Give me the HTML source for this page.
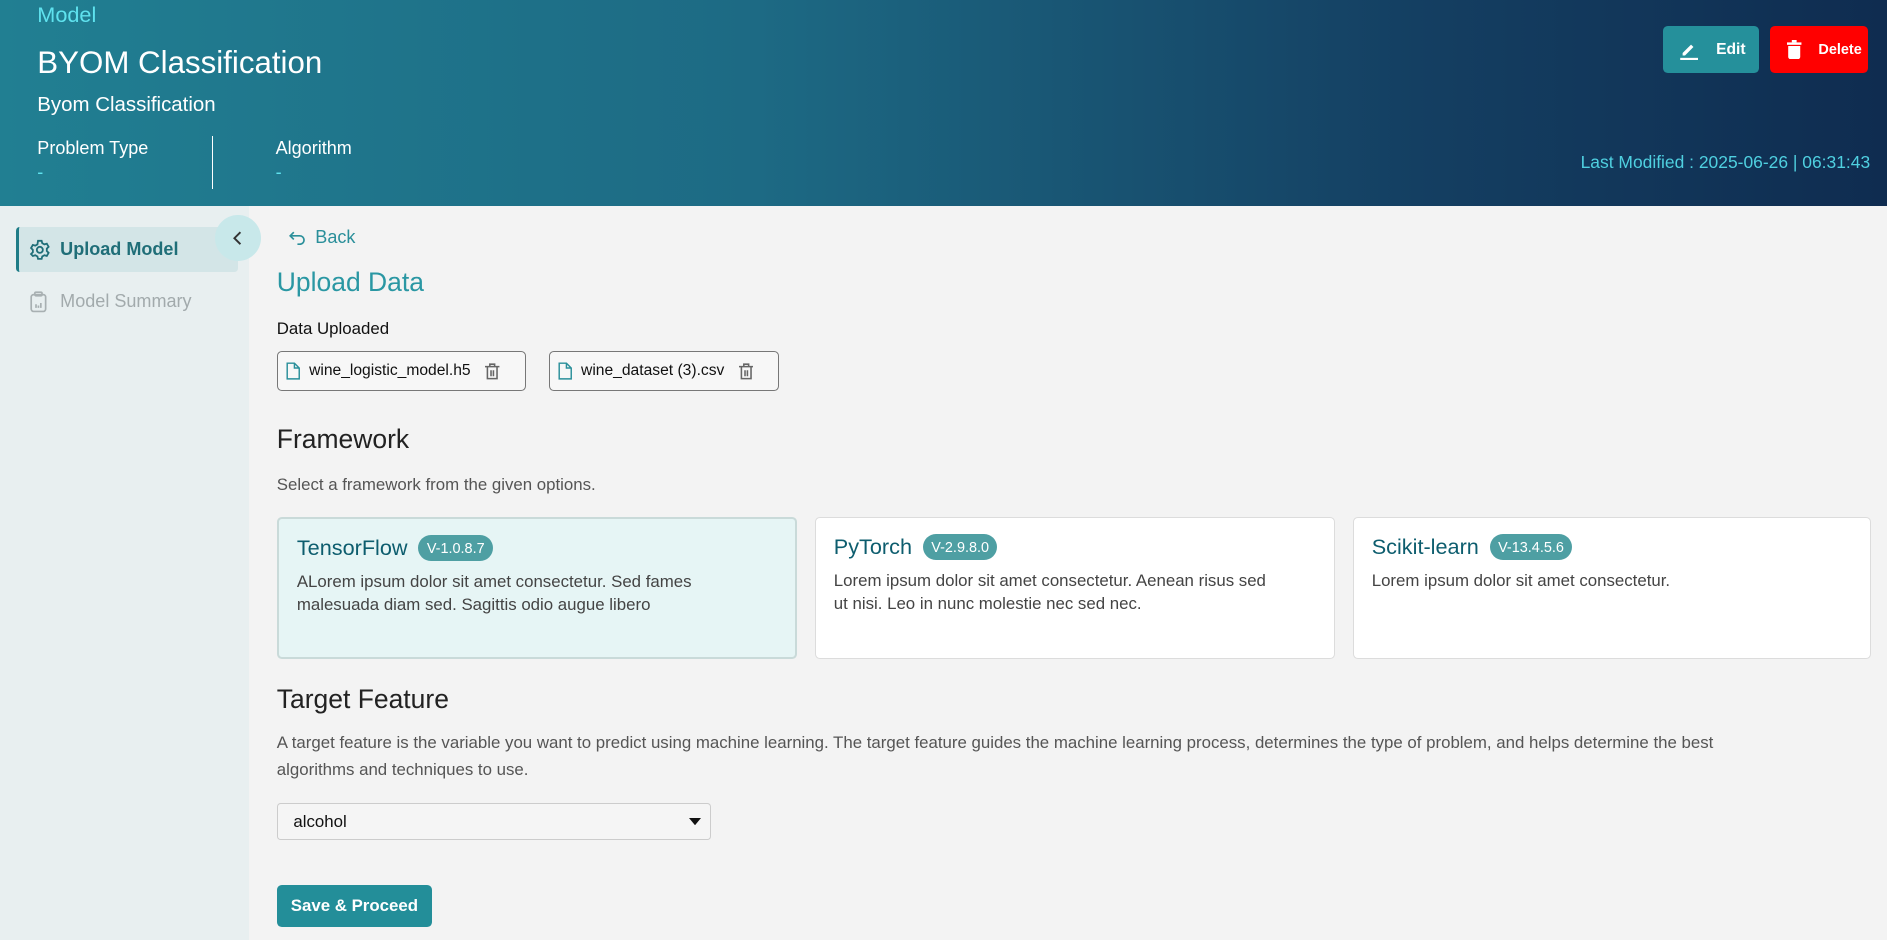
<!DOCTYPE html>
<html><head><meta charset="utf-8"><style>
html{zoom:1.20345}
*{box-sizing:border-box;margin:0;padding:0}
body{width:1568px;height:781px;overflow:hidden;background:#f3f3f3;font-family:"Liberation Sans",sans-serif;position:relative}
.a{position:absolute;white-space:nowrap}
.hdr{position:absolute;left:0;top:0;width:1568px;height:171px;background:linear-gradient(90deg,#217f92 0%,#1d6a84 40%,#143f62 75%,#0f2c50 100%)}
.side{position:absolute;left:0;top:171px;width:207px;height:610px;background:#e8eff0}
.chip{position:absolute;top:292px;height:33px;border:1px solid #777;border-radius:4px;background:#f7f7f7;font-size:13px;color:#111;display:flex;align-items:center;padding-left:7px}
.card{position:absolute;top:430px;width:432px;height:118px;background:#fff;border:1px solid #dcdcdc;border-radius:4px;padding:13px 15px}
.card.sel{background:#e6f5f5;border:2px solid #c9dad9}
.t{font-size:18px;color:#0d5d6e;display:flex;align-items:center}
.b{display:inline-flex;align-items:center;margin-left:9px;background:#4e9fa3;color:#fff;font-size:12px;height:21px;padding:1px 7px 0;border-radius:11px}
.d{font-size:14px;color:#444;line-height:19px;margin-top:8px}
.h2{font-size:22px;color:#222;font-weight:300}
</style></head><body>
<div class="hdr"></div>
<div class="a" style="left:31px;top:2px;font-size:18px;color:#5fe2ee">Model</div>
<div class="a" style="left:31px;top:37px;font-size:26px;color:#fff">BYOM Classification</div>
<div class="a" style="left:31px;top:77px;font-size:17px;color:#fff">Byom Classification</div>
<div class="a" style="left:31px;top:115px;font-size:15px;color:#fff">Problem Type</div>
<div class="a" style="left:31px;top:135px;font-size:15px;color:#5fe2ee">-</div>
<div class="a" style="left:176px;top:113px;width:1px;height:44px;background:#fff"></div>
<div class="a" style="left:229px;top:115px;font-size:15px;color:#fff">Algorithm</div>
<div class="a" style="left:229px;top:135px;font-size:15px;color:#5fe2ee">-</div>
<div class="a" style="left:1382px;top:22px;width:80px;height:39px;background:#25909b;border-radius:4px;color:#fff;font-weight:bold;font-size:13px">
<svg style="position:absolute;left:13px;top:12px" width="16" height="16" viewBox="0 0 16 16"><path d="M3 10 L10 3 L12 5 L5 12 L3 12Z" fill="#fff"/><rect x="1" y="14" width="16" height="2" fill="#fff"/></svg>
<span style="position:absolute;left:44px;top:12px">Edit</span></div>
<div class="a" style="left:1471px;top:22px;width:81px;height:39px;background:#ff0000;border-radius:4px;color:#fff;font-weight:bold;font-size:12px">
<svg style="position:absolute;left:14px;top:11px" width="12" height="16" viewBox="0 0 12 16"><rect x="0" y="2" width="12" height="2" fill="#fff"/><rect x="4" y="0" width="4" height="2" fill="#fff"/><path d="M1 5h10v9a2 2 0 0 1-2 2H3a2 2 0 0 1-2-2z" fill="#fff"/></svg>
<span style="position:absolute;left:40px;top:13px">Delete</span></div>
<div class="a" style="right:14px;top:126px;font-size:14.5px;color:#4fd0e0">Last Modified : 2025-06-26 | 06:31:43</div>

<div class="side"></div>
<div class="a" style="left:13px;top:189px;width:185px;height:37px;background:#d3e5e7;border-left:3px solid #1f7c87;border-radius:3px"></div>
<svg class="a" style="left:24px;top:199px" width="18" height="18" viewBox="0 0 18 18" fill="none" stroke="#1f6e78" stroke-width="1.5"><path d="M7.5 1.5h3l.5 2 1.8 1 2-.6 1.5 2.6-1.5 1.5v2l1.5 1.5-1.5 2.6-2-.6-1.8 1-.5 2h-3l-.5-2-1.8-1-2 .6L1.7 12.5l1.5-1.5V9L1.7 7.5l1.5-2.6 2 .6L7 4.5z"/><circle cx="9" cy="9" r="2.5"/></svg>
<div class="a" style="left:50px;top:199px;font-size:15px;font-weight:bold;color:#1f6e78">Upload Model</div>
<svg class="a" style="left:25px;top:242px" width="14" height="18" viewBox="0 0 14 18" fill="none" stroke="#a8b0b2" stroke-width="1.4"><rect x="1" y="3" width="12" height="14" rx="2"/><rect x="4" y="1" width="6" height="3" rx="1"/><path d="M5 14v-3M7 14v-2M9 14v-4"/></svg>
<div class="a" style="left:50px;top:242px;font-size:15px;color:#a2aaac">Model Summary</div>
<div class="a" style="left:179px;top:179px;width:38px;height:38px;border-radius:50%;background:#c8e8ea"></div>
<svg class="a" style="left:193px;top:192px" width="10" height="12" viewBox="0 0 10 12"><path d="M7 1 L2 6 L7 11" stroke="#333" stroke-width="1.6" fill="none"/></svg>

<svg class="a" style="left:240px;top:192px" width="14" height="12" viewBox="0 0 14 12" fill="none" stroke="#2a8f9a" stroke-width="1.4"><path d="M4 1 L1 4 L4 7"/><path d="M1 4h8a3.5 3.5 0 0 1 0 7H7"/></svg>
<div class="a" style="left:262px;top:189px;font-size:15px;color:#2a8f9a">Back</div>
<div class="a" style="left:230px;top:222px;font-size:22px;color:#2a97a3">Upload Data</div>
<div class="a" style="left:230px;top:265px;font-size:14px;color:#111">Data Uploaded</div>
<div class="chip" style="left:230px;width:207px"><svg width="12" height="15" viewBox="0 0 12 15" fill="none" stroke="#2a8f9a" stroke-width="1.2"><path d="M1 1h6l4 4v9H1z M7 1v4h4"/></svg><span style="margin-left:7px">wine_logistic_model.h5</span>
<svg style="margin-left:12px" width="12" height="14" viewBox="0 0 12 14" fill="none" stroke="#666" stroke-width="1.3"><path d="M0 3h12M4 3V1h4v2M2 3v10h8V3M5 6v5M7 6v5"/></svg></div>
<div class="chip" style="left:456px;width:191px"><svg width="12" height="15" viewBox="0 0 12 15" fill="none" stroke="#2a8f9a" stroke-width="1.2"><path d="M1 1h6l4 4v9H1z M7 1v4h4"/></svg><span style="margin-left:7px">wine_dataset (3).csv</span>
<svg style="margin-left:12px" width="12" height="14" viewBox="0 0 12 14" fill="none" stroke="#666" stroke-width="1.3"><path d="M0 3h12M4 3V1h4v2M2 3v10h8V3M5 6v5M7 6v5"/></svg></div>

<div class="a h2" style="left:230px;top:352px">Framework</div>
<div class="a" style="left:230px;top:395px;font-size:14px;color:#555">Select a framework from the given options.</div>
<div class="card sel" style="left:230px"><div class="t">TensorFlow<span class="b">V-1.0.8.7</span></div><div class="d">ALorem ipsum dolor sit amet consectetur. Sed fames<br>malesuada diam sed. Sagittis odio augue libero</div></div>
<div class="card" style="left:677px"><div class="t">PyTorch<span class="b">V-2.9.8.0</span></div><div class="d">Lorem ipsum dolor sit amet consectetur. Aenean risus sed<br>ut nisi. Leo in nunc molestie nec sed nec.</div></div>
<div class="card" style="left:1124px;width:431px"><div class="t">Scikit-learn<span class="b">V-13.4.5.6</span></div><div class="d">Lorem ipsum dolor sit amet consectetur.</div></div>

<div class="a h2" style="left:230px;top:568px">Target Feature</div>
<div class="a" style="left:230px;top:607px;font-size:14px;color:#555;line-height:22px;white-space:normal;width:1300px">A target feature is the variable you want to predict using machine learning. The target feature guides the machine learning process, determines the type of problem, and helps determine the best<br>algorithms and techniques to use.</div>
<div class="a" style="left:230px;top:667px;width:361px;height:31px;border:1px solid #ccc;border-radius:3px;background:#f5f5f5;font-size:14px;color:#111;padding:7px 0 0 13px">alcohol
<svg style="position:absolute;right:8px;top:12px" width="10" height="6" viewBox="0 0 10 6"><path d="M0 0h10L5 6z" fill="#111"/></svg></div>
<div class="a" style="left:230px;top:735px;width:129px;height:35px;background:#238e99;border-radius:4px;color:#fff;font-weight:bold;font-size:14px;text-align:center;line-height:35px">Save &amp; Proceed</div>
</body></html>
